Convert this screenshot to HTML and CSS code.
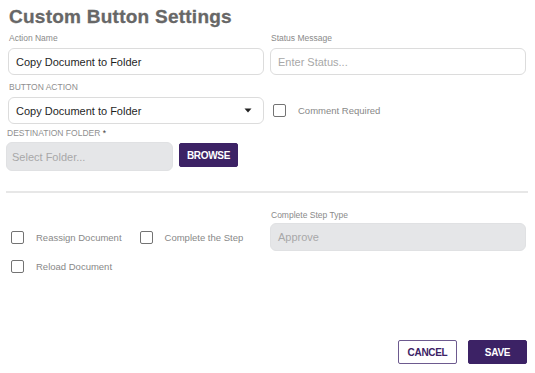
FILE: index.html
```html
<!DOCTYPE html>
<html>
<head>
<meta charset="utf-8">
<link rel="stylesheet" href="styles.css">
</head>
<body>
<div class="page">
  <h1 class="title">Custom Button Settings</h1>
  <div class="row row1">
    <div class="field">
      <div class="label">Action Name</div>
      <div class="input">Copy Document to Folder</div>
    </div>
    <div class="field">
      <div class="label">Status Message</div>
      <div class="input placeholder">Enter Status...</div>
    </div>
  </div>
  <div class="row row2">
    <div class="field">
      <div class="label caps">BUTTON ACTION</div>
      <div class="input select">
        <span>Copy Document to Folder</span>
        <svg class="caret" width="8" height="5" viewBox="0 0 8 5"><path d="M0.5 0.5h7L4 4.5z" fill="#222"/></svg>
      </div>
    </div>
    <div class="check-wrap">
      <label class="check"><span class="box"></span><span class="ctext">Comment Required</span></label>
    </div>
  </div>
  <div class="dest">
    <div class="label caps">DESTINATION FOLDER <span class="star">*</span></div>
    <div class="dest-row">
      <div class="input disabled dest-input placeholder">Select Folder...</div>
      <button class="btn primary browse">BROWSE</button>
    </div>
  </div>
  <div class="divider"></div>
  <div class="row row4">
    <div class="checks">
      <div class="check-line">
        <label class="check"><span class="box"></span><span class="ctext">Reassign Document</span></label>
        <label class="check"><span class="box"></span><span class="ctext">Complete the Step</span></label>
      </div>
      <div class="check-line">
        <label class="check"><span class="box"></span><span class="ctext">Reload Document</span></label>
      </div>
    </div>
    <div class="field">
      <div class="label">Complete Step Type</div>
      <div class="input disabled placeholder">Approve</div>
    </div>
  </div>
  <div class="footer">
    <button class="btn outline">CANCEL</button>
    <button class="btn primary">SAVE</button>
  </div>
</div>
</body>
</html>
```
FILE: styles.css
```css
* { box-sizing: border-box; }
html, body { margin: 0; padding: 0; background: #fff; }
body { font-family: "Liberation Sans", Arial, sans-serif; width: 535px; height: 373px; overflow: hidden; }
.page { padding: 0 9px 0 8px; }
.title {
  margin: 0;
  padding-top: 5px;
  font-size: 19px;
  line-height: 24px;
  font-weight: bold;
  color: #676767;
  padding-left: 1px;
  letter-spacing: 0.25px;
  -webkit-text-stroke: 0.3px #676767;
}
.row { display: grid; grid-template-columns: 256px 256px; column-gap: 6px; }
.row1 { margin-top: 4px; }
.label {
  font-size: 8.5px;
  line-height: 11px;
  color: #8a8a8a;
  padding-left: 1px;
  margin-bottom: 4px;
}
.caps { color: #8f8f8f; }
.star { color: #444; }
.input {
  height: 27px;
  border: 1px solid #dcdcdc;
  border-radius: 6px;
  font-size: 11px;
  color: #1f1f1f;
  padding: 0 7px;
  display: flex;
  align-items: center;
  background: #fff;
}
.placeholder { color: #a8a8a8; }
.disabled { background: #e5e6e8; border-color: #e0e1e3; }
.row2 { margin-top: 7px; }
.select { justify-content: space-between; padding-right: 11px; }
.caret { display: block; }
.check-wrap { display: flex; align-items: flex-end; padding-left: 3px; }
.check-wrap .check { height: 27px; }
.check { display: flex; align-items: center; }
.box {
  width: 13px; height: 13px;
  border: 1.5px solid #737373;
  border-radius: 2px;
  display: inline-block;
  background: #fff;
}
.ctext { font-size: 9.5px; color: #888; margin-left: 12px; }
.dest { margin-top: 4px; margin-left: -2px; }
.dest .label { padding-left: 1px; margin-bottom: 3px; }
.dest-row { display: flex; align-items: flex-start; }
.dest-input { width: 167px; height: 29px; padding-left: 5px; }
.btn {
  font-family: "Liberation Sans", Arial, sans-serif;
  font-size: 10px;
  font-weight: bold;
  height: 24px;
  width: 59px;
  border-radius: 2px;
  padding: 0;
  cursor: pointer;
  letter-spacing: -0.3px;
}
.primary { background: #3c2265; color: #fff; border: 1px solid #3c2265; }
.outline { background: #fff; color: #3c2265; border: 1.5px solid #6d5a8f; }
.browse { margin-left: 6px; margin-top: 1px; }
.divider {
  height: 2px;
  background: #e7e7e7;
  margin: 20px 0 0 -2px;
  width: 522px;
}
.row4 { margin-top: 17px; }
.checks { padding-top: 20px; padding-left: 3px; }
.check-line { display: flex; height: 14px; }
.check-line + .check-line { margin-top: 15px; }
.check-line .check + .check { margin-left: 18px; }
.row4 .label { margin-bottom: 2px; }
.row4 .input { height: 28px; }
.footer { display: flex; justify-content: flex-end; gap: 11px; margin-top: 67px; margin-right: -1px; }
```
